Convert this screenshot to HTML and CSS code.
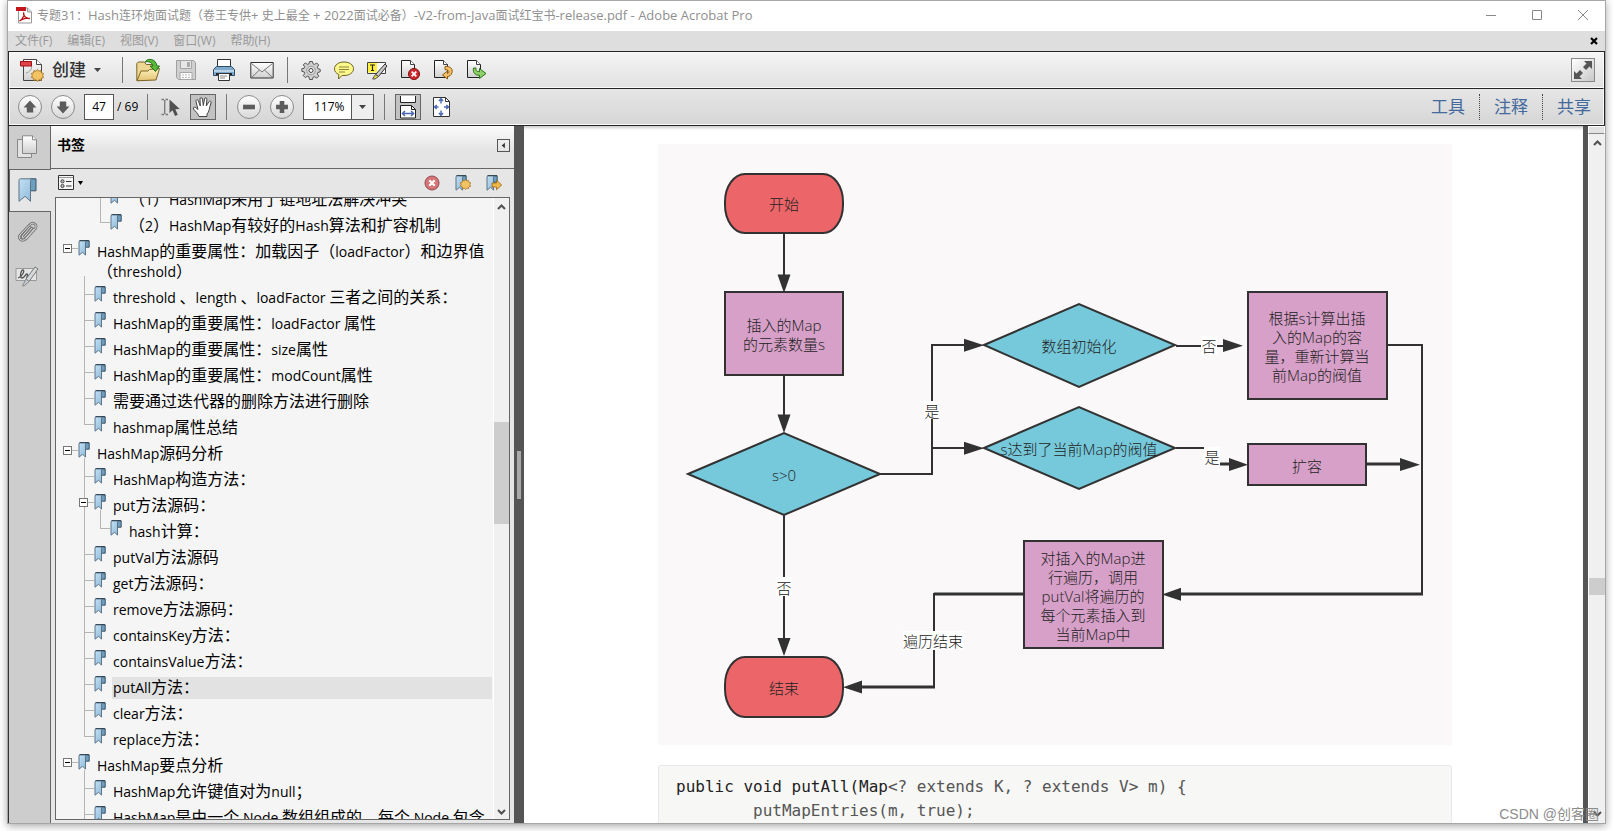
FILE: index.html
```html
<!DOCTYPE html>
<html lang="zh-CN">
<head>
<meta charset="utf-8">
<title>Adobe Acrobat Pro</title>
<link rel="stylesheet" href="styles.css">
</head>
<body>
<svg class="defs" aria-hidden="true">
  <defs>
    <linearGradient id="blue" x1="0" y1="0" x2="1" y2="1"><stop offset="0" stop-color="#c3e0f3"/><stop offset="1" stop-color="#8db9d9"/></linearGradient>
    <linearGradient id="steel" x1="0" y1="0" x2="0" y2="1"><stop offset="0" stop-color="#fff"/><stop offset="1" stop-color="#d0d0d0"/></linearGradient>
    <linearGradient id="gold" x1="0" y1="0" x2="0" y2="1"><stop offset="0" stop-color="#fff3bd"/><stop offset="1" stop-color="#e2c272"/></linearGradient>
    <symbol id="mark" viewBox="0 0 12 16">
      <path d="M7.500 .8h3.700v6.400H7.500z" fill="#6e9fc0" stroke="#3c5364"/>
      <path d="M2.200.8h6.300c-.8.5-1 1.200-1 2v12.400L4.600 12.200 1 15.200V2C1 1.300 1.500.8 2.200.8z" fill="url(#blue)" stroke="#5c7485"/>
      <path d="M1.500.6h9.500" stroke="#2f4351"/>
    </symbol>
    <symbol id="sheet" viewBox="0 0 20 20">
      <path d="M2.500 1.500h9l4 4v13h-13z" fill="url(#steel)" stroke="#222"/>
      <path d="M11.500 1.500v4h4" fill="#fff" stroke="#444"/>
    </symbol>
    <symbol id="burst" viewBox="0 0 12 12">
      <path d="M6 .5l1.300 1.600 2-.6.3 2 2 .6-.8 1.900.8 1.900-2 .6-.3 2-2-.6L6 11.500 4.700 9.900l-2 .6-.3-2-2-.6.8-1.900-.8-1.900 2-.6.3-2 2 .6z" fill="#f3c263" stroke="#a3701a" stroke-width=".8"/>
    </symbol>
  </defs>
</svg>

<div class="window">
  <header class="titlebar">
    <svg class="app-icon" viewBox="0 0 17 17"><path d="M2.500 1h9l4 4v11h-13z" fill="#fff" stroke="#999"/><path d="M11.500 1v4h4" fill="#ddd" stroke="#999"/><path d="M0 0h10v4H0z" fill="#c4161c"/><path d="M3.500 14C7 12 8.500 8 7.700 6c-1 2 2.500 6 6 5.500C11 10.500 6 12 3.500 14z" fill="none" stroke="#b81218" stroke-width="1.300"/></svg>
    <h1 class="title">专题<span class="la">31</span>：<span class="la">Hash</span>连环炮面试题（卷王专供<span class="la">+ </span>史上最全<span class="la"> + 2022</span>面试必备）<span class="la">-V2-from-Java</span>面试红宝书<span class="la">-release.pdf - Adobe Acrobat Pro</span></h1>
    <div class="controls">
      <button aria-label="最小化"><svg viewBox="0 0 12 12"><path d="M1 6.500h10"/></svg></button>
      <button aria-label="最大化"><svg viewBox="0 0 12 12"><path d="M1.500 1.500h9v9h-9z"/></svg></button>
      <button aria-label="关闭"><svg viewBox="0 0 12 12"><path d="M1 1l10 10M11 1L1 11"/></svg></button>
    </div>
  </header>

  <nav class="menubar">
    <button>文件(F)</button><button>编辑(E)</button><button>视图(V)</button><button>窗口(W)</button><button>帮助(H)</button>
    <button class="doc-close" aria-label="关闭文档"><svg viewBox="0 0 8 8"><path d="M1 1l6 6M7 1L1 7" stroke="#000" stroke-width="2.200"/></svg></button>
  </nav>

  <div class="bars">
    <div class="toolbar main-tools">
      <button class="create">
        <svg class="i24" viewBox="0 0 24 24"><path d="M3.500 1.500h13l5 5v16h-18z" fill="url(#steel)" stroke="#444"/><path d="M16.500 1.500v5h5" fill="#fff" stroke="#444"/><path d="M6 15c4-1 6-4 5.500-7" stroke="#999" fill="none"/><path d="M.5 3.500h11v4.500H.5z" fill="#e0444a" stroke="#a01116"/><use href="#burst" x="11" y="11" width="13" height="13"/></svg>
        <span>创建</span>
        <svg class="caret" viewBox="0 0 7 4"><path d="M0 0h7L3.500 4z" fill="#444"/></svg>
      </button>
      <i class="sep"></i>
      <div class="group wide">
        <button class="tool" aria-label="打开"><svg viewBox="0 0 24 24"><path d="M.8 22.500V5.500l1.500-1.500h6l2 2.500h9.500v14z" fill="#eed794" stroke="#7c6424"/><path d="M1 22.800l4-9.800h7l1.500-1.500 10-1-3.500 11.500z" fill="url(#gold)" stroke="#7c6424"/><path d="M9 4c2.500-4 10.500-4 12 4h2.500L19.500 13.500 14 8h3C16 4 12.500 3 9 4z" fill="#5cb93a" stroke="#22711a"/></svg></button>
        <button class="tool" aria-label="保存"><svg viewBox="0 0 24 24"><path d="M2.500 2.500h17l2 2v17h-17l-2-2z" fill="#d0d0d0" stroke="#a0a0a0"/><path d="M6.500 2.500h11v8h-11z" fill="#e7e7e7" stroke="#a5a5a5"/><path d="M13 4h3v5h-3z" fill="#aaa"/><path d="M6 14.500h12v7H6z" fill="#fafafa" stroke="#a5a5a5"/><path d="M8 17h8M8 19.500h8" stroke="#bbb" stroke-dasharray="2 1"/></svg></button>
        <button class="tool" aria-label="打印"><svg viewBox="0 0 24 24"><path d="M5.500 10V1.500h13V10" fill="#fff" stroke="#333"/><path d="M1.500 17.500v-6l3-3h15l3 3v6z" fill="#7fa9cc" stroke="#2f4d68"/><path d="M2 12h20v2H2z" fill="#b8d2e6"/><path d="M4 16h16" stroke="#222" stroke-width="2"/><path d="M6.500 15.500h11v7h-11z" fill="#fff" stroke="#333"/><path d="M8 18h7M8 20h5" stroke="#888"/></svg></button>
        <button class="tool" aria-label="邮件"><svg viewBox="0 0 24 24"><path d="M.8 4.500h22.400v15.500H.8z" fill="url(#steel)" stroke="#333"/><path d="M1.500 5.500L12 14 22.500 5.500M1.500 19.500l8-7.500M22.500 19.500l-8-7.500" fill="none" stroke="#777"/></svg></button>
      </div>
      <i class="sep"></i>
      <div class="group">
        <button class="tool" aria-label="设置"><svg viewBox="0 0 24 24"><path d="M10.500 3.500h3l.5 2.300 1.500.6 2.200-1.400 2 2-1.400 2.200.6 1.500 2.300.6v2.500l-2.300.6-.6 1.500 1.400 2.200-2 2-2.200-1.400-1.500.6-.5 2.200h-3L10 18.800l-1.500-.6-2.200 1.400-2-2 1.400-2.200-.6-1.500-2.300-.6v-2.500l2.300-.6.6-1.500L4.300 6.900l2-2 2.200 1.500 1.500-.6z" fill="#cfcfcf" stroke="#555"/><circle cx="12" cy="12.500" r="4.300" fill="#ddd" stroke="#999"/><circle cx="12" cy="12.500" r="2" fill="#fff" stroke="#444"/></svg></button>
        <button class="tool" aria-label="批注"><svg viewBox="0 0 24 24"><path d="M12 4c5.500 0 9.500 3 9.500 6.800S17.500 17.500 12 17.500l-2-.1L6.500 21l.3-4.500C4 15.300 2.500 13.300 2.500 10.800 2.500 7 6.500 4 12 4z" fill="#fff98c" stroke="#6a6320"/><path d="M7 9h10M7 11.500h10M7 14h6" stroke="#8b843a"/></svg></button>
        <button class="tool" aria-label="高亮文本"><svg viewBox="0 0 24 24"><path d="M2.500 4.500h18v11h-18z" fill="#fafafa" stroke="#444"/><path d="M3 5h9v9.500H3z" fill="#ffef3e"/><path d="M5 7h5M7.500 7v5.500M6 12.500h3" stroke="#222" stroke-width="1.200"/><path d="M20 6l2 2-8.500 10.500-3-2z" fill="#c8c8c8" stroke="#333"/><path d="M10.500 16.500l3 2L10 21H7.500z" fill="#e8dc34" stroke="#555"/></svg></button>
        <button class="tool" aria-label="删除页面"><svg viewBox="0 0 24 24"><use href="#sheet" x="1" y="1" width="20" height="20"/><circle cx="16" cy="16" r="5.500" fill="#d3252c" stroke="#7c0f13"/><path d="M13.700 13.700l4.600 4.600M18.300 13.700l-4.600 4.600" stroke="#fff" stroke-width="1.800"/></svg></button>
        <button class="tool" aria-label="旋转页面"><svg viewBox="0 0 24 24"><use href="#sheet" x="1" y="1" width="20" height="20"/><path d="M14 8.500c5-.5 8 2 7 6-.5 2.500-2.500 4-4.500 4v2.500L11.500 17l5-4v2.500c2-.5 2.500-3.500-2.500-4z" fill="#f5c06a" stroke="#8a5a12"/></svg></button>
        <button class="tool" aria-label="导出页面"><svg viewBox="0 0 24 24"><use href="#sheet" x="1" y="1" width="20" height="20"/><path d="M9.500 10c-1 5 2 7.500 6 7.200v3.300l6.500-5-6.500-5v3.200c-3 0-4-1.200-3.500-3.700z" fill="#8fd06c" stroke="#2c7418"/></svg></button>
      </div>
      <button class="expand" aria-label="阅读模式"><svg viewBox="0 0 20 20"><path d="M11 1h8v8l-2.500-2.500-3.500 3.500-3-3 3.500-3.500zM9 19H1v-8l2.500 2.500L7 10l3 3-3.500 3.500z" fill="#555"/></svg></button>
    </div>

    <div class="toolbar page-tools">
      <div class="group">
        <button class="round" aria-label="上一页"><svg viewBox="0 0 24 24"><path d="M12 5l7 7.500h-3.500V18h-7v-5.500H5z"/></svg></button>
        <button class="round" aria-label="下一页"><svg viewBox="0 0 24 24"><path d="M12 19l7-7.500h-3.500V6h-7v5.500H5z"/></svg></button>
        <div class="pages"><input type="text" id="page" value="47" aria-label="页码"><label for="page">/ 69</label></div>
      </div>
      <i class="sep"></i>
      <div class="group tight">
        <button class="tool" aria-label="选择"><svg viewBox="0 0 24 24"><path d="M3.500 4.500H6M7.500 4.500H10M3.500 19.500H6M7.500 19.500H10M6.700 5v14" stroke="#777" stroke-width="1.300"/><path d="M11.500 4.500v13.500l3-2.800 2.500 5.800 2.800-1.200-2.500-5.500 4.500-.3z" fill="#505050"/></svg></button>
        <button class="tool on" aria-label="手形"><svg viewBox="0 0 24 24"><path d="M8 21.500c-1-3-3.500-5-5.500-7.500-.8-1.500 1-2.500 2.300-1.400L7 14.500 5 6.500C4.600 4.700 6.700 4 7.300 5.800L9.300 11 9 4c0-1.800 2.200-1.800 2.500 0L12.300 10.500 13.500 4c.4-1.700 2.600-1.400 2.400.4L15.300 11l2.500-4.200c1-1.500 2.900-.5 2.200 1.200-1.800 4.500-1.500 9-4 11v2.500z" fill="#fff" stroke="#444"/></svg></button>
      </div>
      <i class="sep"></i>
      <div class="group">
        <button class="round" aria-label="缩小"><svg viewBox="0 0 24 24"><path d="M5.500 9.500h13v5h-13z"/></svg></button>
        <button class="round" aria-label="放大"><svg viewBox="0 0 24 24"><path d="M9.500 5.500h5v4h4v5h-4v4h-5v-4h-4v-5h4z"/></svg></button>
        <div class="zoom">
          <select aria-label="缩放比例"><option>117%</option></select>
          <svg class="caret" viewBox="0 0 7 4"><path d="M0 0h7L3.500 4z" fill="#444"/></svg>
        </div>
      </div>
      <i class="sep"></i>
      <div class="group tight">
        <button class="tool on" aria-label="适合宽度"><svg viewBox="0 0 24 24"><path d="M4.500 1v6.500h15V1" fill="#fff" stroke="#222"/><path d="M4.500 23V10.500h11l4 4V23z" fill="#fff" stroke="#222"/><path d="M15.500 10.500v4h4" fill="none" stroke="#222"/><path d="M6.500 18.500h11M9 16l-2.500 2.500L9 21M15 16l2.500 2.500L15 21" fill="none" stroke="#4a67b5" stroke-width="1.500"/></svg></button>
        <button class="tool" aria-label="适合页面"><svg viewBox="0 0 24 24"><path d="M4.500 2.500h12l4 4v15h-16z" fill="#fff" stroke="#333"/><path d="M16.500 2.500v4h4" fill="none" stroke="#333"/><path d="M12 3.500v5M12 15.500v5M5.500 12h4M15 12h5M10 6l2-2.500L14 6M10 18l2 2.500 2-2.500M7.700 10L5.500 12l2.200 2M17.300 10l2.200 2-2.200 2" fill="none" stroke="#4a67b5" stroke-width="1.400"/></svg></button>
      </div>
      <div class="panes"><button>工具</button><button>注释</button><button>共享</button></div>
    </div>
  </div>

  <div class="content">
    <nav class="strip">
      <button aria-label="页面缩略图"><svg viewBox="0 0 24 24"><path d="M2.500 4.500h14v18h-14z" fill="#e2e2e2" stroke="#888"/><path d="M7.500 .8h10l4 4V18.500h-14z" fill="url(#steel)" stroke="#888"/><path d="M17.500 .8v4h4" fill="#eee" stroke="#888"/></svg></button>
      <button class="current" aria-label="书签"><svg viewBox="0 0 24 24"><path d="M14 .8h6v12h-6z" fill="#6e9fc0" stroke="#3c5364"/><path d="M4.500.8h12c-1.500.5-2 1.700-2 3v19.500L9 18.300l-6 5V2.500C3 1.500 3.500.8 4.500.8z" fill="url(#blue)" stroke="#5c7485"/></svg></button>
      <button aria-label="附件"><svg viewBox="0 0 24 24"><g fill="none" stroke-linecap="round"><path d="M19 8l-8.500 10c-3 3-8 0-5.500-4L15 3.500c3-3 7.500 0 5.500 4L11 18M17 7l-8 9.500c-1 1-2.500 0-1.500-1.500L15 6" stroke="#777" stroke-width="2.600"/><path d="M19 8l-8.500 10c-3 3-8 0-5.500-4L15 3.500c3-3 7.500 0 5.500 4L11 18M17 7l-8 9.500c-1 1-2.500 0-1.500-1.500L15 6" stroke="#ddd"/></g></svg></button>
      <button aria-label="签名"><svg viewBox="0 0 24 24"><path d="M1 4.500h20.500v12H1z" fill="#e5e5e5" stroke="#999"/><path d="M3 14c5-2 7-8 5-8s-4 8-1 8 3-4 5-4-2 5 1 3" fill="none" stroke="#555" stroke-width="1.300"/><path d="M20 3l3 2-9 12.500-3-2.500z" fill="#d5d9dc" stroke="#777"/><path d="M11 15l3 2.500L9 22H7.500z" fill="#c0ccd5" stroke="#888"/></svg></button>
    </nav>

    <aside class="panel">
      <div class="panel-head"><h2>书签</h2><button class="collapse" aria-label="折叠面板"><svg viewBox="0 0 12 12"><path d="M7.500 3v6L4 6z" fill="#333"/></svg></button></div>
      <div class="panel-tools">
        <button class="options" aria-label="选项"><svg class="list" viewBox="0 0 17 16"><path d="M.5.5h15v14H.5z" fill="#f6f6f6" stroke="#333"/><path d="M1 2.500h14" stroke="#999"/><circle cx="4.500" cy="6.300" r="1.600" fill="#bbb" stroke="#444"/><circle cx="4.500" cy="11" r="1.600" fill="#bbb" stroke="#444"/><path d="M8 6.500h5.500M8 11h5.500" stroke="#333"/></svg><svg class="dot" viewBox="0 0 5 4"><path d="M0 0h5L2.500 4z"/></svg></button>
        <button class="mini" aria-label="删除书签"><svg viewBox="0 0 16 16"><circle cx="8" cy="8" r="7" fill="#d87377" stroke="#8d4b4e"/><path d="M5.300 5.300l5.400 5.400M10.700 5.300l-5.400 5.400" stroke="#fff" stroke-width="2.200"/></svg></button>
        <button class="mini" aria-label="新建书签"><svg viewBox="0 0 16 16"><use href="#mark" x="0" y="0" width="12" height="16"/><use href="#burst" x="5" y="4" width="11" height="11"/></svg></button>
        <button class="mini" aria-label="展开当前书签"><svg viewBox="0 0 16 16"><use href="#mark" x="0" y="0" width="12" height="16"/><path d="M6 8h4.500V5.200L15.700 10l-5.200 4.800V12H6z" fill="#f0b646" stroke="#94651a" stroke-width=".8"/></svg></button>
      </div>
      <div class="tree-box">
        <div class="tree-view">
        <ul class="tree">
          <li class="bare"><ul><li class="bare"><ul>
            <li><div class="row"><svg class="bm"><use href="#mark"/></svg><a href="#b1">（<span class="la">1</span>）<span class="la">HashMap</span>采用了链地址法解决冲突</a></div></li>
            <li><div class="row"><svg class="bm"><use href="#mark"/></svg><a href="#b2">（<span class="la">2</span>）<span class="la">HashMap</span>有较好的<span class="la">Hash</span>算法和扩容机制</a></div></li>
          </ul></li></ul></li>
          <li><div class="row"><button class="toggle" aria-label="折叠"></button><svg class="bm"><use href="#mark"/></svg><a href="#b3"><span class="la">HashMap</span>的重要属性：加载因子（<span class="la">loadFactor</span>）和边界值（<span class="la">threshold</span>）</a></div>
            <ul>
              <li><div class="row"><svg class="bm"><use href="#mark"/></svg><a href="#b4"><span class="la">threshold </span>、<span class="la">length </span>、<span class="la">loadFactor </span>三者之间的关系：</a></div></li>
              <li><div class="row"><svg class="bm"><use href="#mark"/></svg><a href="#b5"><span class="la">HashMap</span>的重要属性：<span class="la">loadFactor </span>属性</a></div></li>
              <li><div class="row"><svg class="bm"><use href="#mark"/></svg><a href="#b6"><span class="la">HashMap</span>的重要属性：<span class="la">size</span>属性</a></div></li>
              <li><div class="row"><svg class="bm"><use href="#mark"/></svg><a href="#b7"><span class="la">HashMap</span>的重要属性：<span class="la">modCount</span>属性</a></div></li>
              <li><div class="row"><svg class="bm"><use href="#mark"/></svg><a href="#b8">需要通过迭代器的删除方法进行删除</a></div></li>
              <li><div class="row"><svg class="bm"><use href="#mark"/></svg><a href="#b9"><span class="la">hashmap</span>属性总结</a></div></li>
            </ul>
          </li>
          <li><div class="row"><button class="toggle" aria-label="折叠"></button><svg class="bm"><use href="#mark"/></svg><a href="#b10"><span class="la">HashMap</span>源码分析</a></div>
            <ul>
              <li><div class="row"><svg class="bm"><use href="#mark"/></svg><a href="#b11"><span class="la">HashMap</span>构造方法：</a></div></li>
              <li><div class="row"><button class="toggle" aria-label="折叠"></button><svg class="bm"><use href="#mark"/></svg><a href="#b12"><span class="la">put</span>方法源码：</a></div>
                <ul><li><div class="row"><svg class="bm"><use href="#mark"/></svg><a href="#b13"><span class="la">hash</span>计算：</a></div></li></ul>
              </li>
              <li><div class="row"><svg class="bm"><use href="#mark"/></svg><a href="#b14"><span class="la">putVal</span>方法源码</a></div></li>
              <li><div class="row"><svg class="bm"><use href="#mark"/></svg><a href="#b15"><span class="la">get</span>方法源码：</a></div></li>
              <li><div class="row"><svg class="bm"><use href="#mark"/></svg><a href="#b16"><span class="la">remove</span>方法源码：</a></div></li>
              <li><div class="row"><svg class="bm"><use href="#mark"/></svg><a href="#b17"><span class="la">containsKey</span>方法：</a></div></li>
              <li><div class="row"><svg class="bm"><use href="#mark"/></svg><a href="#b18"><span class="la">containsValue</span>方法：</a></div></li>
              <li><div class="row"><svg class="bm"><use href="#mark"/></svg><a class="selected" href="#b19"><span class="la">putAll</span>方法：</a></div></li>
              <li><div class="row"><svg class="bm"><use href="#mark"/></svg><a href="#b20"><span class="la">clear</span>方法：</a></div></li>
              <li><div class="row"><svg class="bm"><use href="#mark"/></svg><a href="#b21"><span class="la">replace</span>方法：</a></div></li>
            </ul>
          </li>
          <li><div class="row"><button class="toggle" aria-label="折叠"></button><svg class="bm"><use href="#mark"/></svg><a href="#b22"><span class="la">HashMap</span>要点分析</a></div>
            <ul>
              <li><div class="row"><svg class="bm"><use href="#mark"/></svg><a href="#b23"><span class="la">HashMap</span>允许键值对为<span class="la">null</span>；</a></div></li>
              <li class="more"><div class="row"><svg class="bm"><use href="#mark"/></svg><a href="#b24"><span class="la">HashMap</span>是由一个<span class="la"> Node </span>数组组成的，每个<span class="la"> Node </span>包含</a></div></li>
            </ul>
          </li>
        </ul>
        </div>
        <div class="scroll">
          <svg class="arrow" viewBox="0 0 9 6"><path d="M1 5l3.500-3.500L8 5"/></svg>
          <div class="track tree-track"><i class="before"></i><i class="thumb"></i><i class="after"></i></div>
          <svg class="arrow" viewBox="0 0 9 6"><path d="M1 1l3.500 3.500L8 1"/></svg>
        </div>
      </div>
    </aside>

    <div class="splitter"><i></i></div>

    <main class="document">
      <div class="page">
        <svg class="flow" viewBox="0 0 794 601" role="img" aria-label="putMapEntries 流程图">
          <g class="line">
            <path d="M126 89v45M126 231v45M126 371v130M222 330h52V201h36M274 304h36M518 202h52M729 201h35v249M518 304h28"/>
            <path class="heavy" d="M562 320h14M708 320h38M765 450H520M366 450h-90"/>
            <path d="M276 449v94"/>
            <path class="heavy" d="M277 543h-76"/>
          </g>
          <g class="head">
            <path d="M119.500 130.500h13L126 149zM119.500 270.500h13L126 289zM119.500 494h13L126 512zM306 194.700v13l20-6.500zM306 297.700v13l20-6.500zM565 195v13l20-6.300zM571 314v13l19-6.300zM742 314v13l20-6.300zM523 443.700v13l-19-6.300zM204 536.500v13l-19-6.300z"/>
          </g>
          <g class="end"><rect x="67" y="30" width="118" height="59" rx="20" ry="28"/><rect x="67" y="513" width="118" height="60" rx="20" ry="28"/></g>
          <g class="step"><rect x="67" y="148" width="118" height="83"/><rect x="590" y="148" width="139" height="107"/><rect x="590" y="300" width="118" height="41"/><rect x="366" y="397" width="139" height="107"/></g>
          <g class="choice"><path d="M30 330l96-41 96 41-96 41zM326 201l95-41 96 41-96 42zM326 304l95-41 96 41-96 41z"/></g>
          <g class="plate"><path d="M266 257h16v18h-16zM543 192h16v19h-16zM546 303h16v17h-16zM118 433h16v19h-16zM245 487h61v19h-61z"/></g>
          <g class="words">
            <text x="126" y="66">开始</text>
            <text x="126" y="187">插入的Map</text><text x="126" y="206">的元素数量s</text>
            <text x="126" y="337">s&gt;0</text>
            <text x="421" y="208">数组初始化</text>
            <text x="421" y="311">s达到了当前Map的阀值</text>
            <text x="659" y="180">根据s计算出插</text><text x="659" y="199">入的Map的容</text><text x="659" y="218">量，重新计算当</text><text x="659" y="237">前Map的阀值</text>
            <text x="649" y="328">扩容</text>
            <text x="435" y="420">对插入的Map进</text><text x="435" y="439">行遍历，调用</text><text x="435" y="458">putVal将遍历的</text><text x="435" y="477">每个元素插入到</text><text x="435" y="496">当前Map中</text>
            <text x="126" y="550">结束</text>
            <text x="274" y="273">是</text><text x="551" y="208">否</text><text x="554" y="319">是</text><text x="126" y="450">否</text><text x="275" y="503">遍历结束</text>
          </g>
        </svg>
        <pre class="code"><code><b>public void putAll(Map</b>&lt;? extends K, ? extends V&gt; m) {
        putMapEntries(m, true);
}</code></pre>
      </div>
    </main>

    <div class="doc-side">
      <i class="split-box"></i>
      <div class="scroll">
        <svg class="arrow" viewBox="0 0 9 6"><path d="M1 5l3.500-3.500L8 5"/></svg>
        <div class="track doc-track"><i class="before"></i><i class="thumb"></i><i class="after"></i></div>
        <svg class="arrow" viewBox="0 0 9 6"><path d="M1 1l3.500 3.500L8 1"/></svg>
      </div>
    </div>
  </div>
  <p class="watermark">CSDN @创客圈</p>
</div>
</body>
</html>
```

FILE: styles.css
```css
* { box-sizing: border-box; }
body {
  margin: 0;
  padding: 0 7px 7px;
  height: 100vh;
  background: #fff;
  color: #000;
  overflow: hidden;
  font-family: "Open Sans", "Noto Sans CJK SC", sans-serif;
}
button { margin: 0; padding: 0; border: 0; background: none; font: inherit; color: inherit; }
svg { display: block; }
.defs { position: absolute; width: 0; height: 0; }

.window {
  position: relative;
  display: flex;
  flex-direction: column;
  height: 100%;
  border: 1px solid #a6a6a6;
  box-shadow: 0 2px 8px rgba(0, 0, 0, .35);
  background: #dedede;
}

/* Title and menu */
.titlebar { display: flex; align-items: center; flex: none; height: 30px; padding: 0 16px 2px 8px; background: #fff; }
.app-icon { width: 17px; height: 17px; margin-right: 4px; }
.title { flex: 1; margin: 0; font-size: 12px; font-weight: 400; line-height: 18px; color: #8f8f8f; white-space: pre; }
.title .la { font-size: 13px; }
.controls { display: flex; gap: 34px; }
.controls svg { width: 12px; height: 12px; fill: none; stroke: #888; }
.menubar { display: flex; align-items: center; flex: none; gap: 15px; height: 20px; padding: 0 7px; font-size: 12px; line-height: 18px; color: #9a9a9a; }
.doc-close { margin-left: auto; }
.doc-close svg { width: 8px; height: 8px; }

/* Toolbars */
.bars { flex: none; border: 1px solid #262626; }
.toolbar { display: flex; align-items: center; height: 36px; border: 1px solid #fafafa; }
.main-tools { padding-left: 10px; background: linear-gradient(#f4f4f4, #e2e2e2); }
.page-tools { height: 37px; padding-left: 8px; border-top: 1px solid #262626; background: linear-gradient(#e6e6e6, #d6d6d6); }
.sep { flex: none; width: 1px; height: 26px; margin: 0 11px; background: #777; }
.page-tools .sep { margin: 0 10px; }
.group { display: flex; align-items: center; gap: 9px; }
.group.wide { gap: 14px; padding: 0 2px; }
.group.tight { gap: 8px; }
.i24 { width: 24px; height: 24px; }
.create { display: flex; align-items: center; gap: 8px; margin-right: 10px; font-size: 17px; line-height: 24px; font-weight: 500; color: #333; }
.caret { width: 7px; height: 4px; }
.tool { width: 24px; height: 24px; }
.tool svg { width: 24px; height: 24px; }
.tool.on { width: 26px; height: 26px; border: 1px solid #666; background: #c2c2c2; }
.expand { width: 24px; height: 24px; margin-left: auto; margin-right: 8px; padding: 1px; border: 1px solid #888; background: linear-gradient(135deg, #fff, #c8c8c8); }
.expand svg { width: 20px; height: 20px; }
.round { width: 24px; height: 24px; border: 1px solid #8b8b8b; border-radius: 50%; background: linear-gradient(#fff, #d8d8d8); }
.round svg { width: 22px; height: 22px; fill: #5c5c5c; }
.pages { display: flex; align-items: center; gap: 3px; font-size: 12px; }
.pages input { width: 30px; height: 26px; padding: 0; border: 1px solid #555; background: #fff; font: inherit; text-align: center; }
.pages label { width: 20px; white-space: nowrap; }
.zoom { position: relative; width: 71px; height: 26px; }
.zoom select {
  appearance: none;
  width: 100%;
  height: 100%;
  padding: 0 0 0 10px;
  border: 1px solid #555;
  border-radius: 0;
  background: linear-gradient(to left, #eee 21px, #555 21px, #555 22px, #fff 22px);
  font: inherit;
  font-size: 12px;
  color: #000;
}
.zoom .caret { position: absolute; right: 8px; top: 11px; pointer-events: none; }
.panes { display: flex; align-items: center; margin-left: auto; font-size: 17px; line-height: 26px; color: #44699c; }
.panes button { padding: 0 14px; }
.panes button:last-child { padding-right: 12px; }
.panes button + button { border-left: 1px dotted #444; }

/* Navigation strip */
.content { display: flex; flex: 1; min-height: 0; border-left: 1px solid #333; background: #e6e6e6; }
.strip { flex: none; width: 42px; border-right: 1px solid #666; background: #cdcdcd; }
.strip button { display: grid; place-items: center; width: 42px; height: 43px; padding: 0 6px 2px 0; }
.strip .current { border: 1px solid #666; border-right: 0; background: #e6e6e6; }
.strip svg { width: 24px; height: 24px; }

/* Bookmarks */
.panel { display: flex; flex-direction: column; flex: none; width: 463px; }
.panel-head { display: flex; align-items: center; justify-content: space-between; flex: none; height: 43px; padding: 0 4px 4px 6px; border-bottom: 1px solid #666; background: linear-gradient(#fbfbfb, #e4e4e4 60%); }
.panel-head h2 { margin: 0; font-size: 14px; line-height: 20px; font-weight: 700; }
.collapse { width: 13px; height: 13px; border: 1px solid #555; }
.collapse svg { width: 11px; height: 11px; }
.panel-tools { display: flex; align-items: center; flex: none; gap: 15px; height: 28px; padding: 0 12px 0 7px; }
.options { display: flex; align-items: center; gap: 3px; margin-right: auto; }
.list { width: 17px; height: 16px; }
.dot { width: 5px; height: 4px; }
.mini svg { width: 16px; height: 16px; }
.tree-box { display: flex; flex: 1; min-height: 0; margin: 0 4px 3px; border: 1px solid #666; background: #f5f5f5; }
.tree-view { flex: 1; min-width: 0; overflow: hidden; }
.tree { margin: -12px 0 0; padding: 0; font-size: 16px; line-height: 20px; }
.tree ul { margin: 0; padding: 0 0 0 16px; }
.tree li { position: relative; list-style: none; }
.tree li::after { content: ""; position: absolute; left: 12px; top: 10px; width: 10px; border-top: 1px solid #b5b5b5; }
.tree li li::before { content: ""; position: absolute; left: 12px; top: -8px; bottom: 0; border-left: 1px solid #b5b5b5; }
.tree li li:last-child::before { bottom: auto; height: 18px; }
.tree li li.more::before { bottom: 0; height: auto; }
.tree li.bare::before, .tree li.bare::after { display: none; }
.row { position: relative; z-index: 1; display: flex; align-items: flex-start; padding-left: 22px; }
.bm { flex: none; width: 12px; height: 16px; margin: 2px 6px 0 0; }
.toggle { flex: none; width: 9px; height: 9px; margin: 6px 6px 0 -15px; border: 1px solid #777; background: linear-gradient(#000, #000) center / 5px 1px no-repeat #fff; }
.row a { flex: 1; margin: 3px 1px 1px 0; padding: 0 0 2px 1px; color: #000; text-decoration: none; }
.row .la { font-size: 14px; line-height: 16px; white-space: pre-wrap; }
.row .selected { background: #e2e2e2; }

/* Scrollbars */
.scroll { display: flex; flex-direction: column; flex: none; align-items: center; width: 16px; padding: 6px 0 4px; border-left: 1px solid #fff; background: #f0f0f0; }
.arrow { flex: none; width: 9px; height: 6px; fill: none; stroke: #505050; stroke-width: 2; }
.track { display: flex; flex-direction: column; flex: 1; width: 100%; }
.thumb { background: #cdcdcd; }
.tree-track .before { flex: 211; }
.tree-track .thumb { flex: 101; }
.tree-track .after { flex: 284; }
.doc-track .before { flex: 432; }
.doc-track .thumb { flex: 17; }
.doc-track .after { flex: 216; }

.splitter { display: grid; place-items: center; flex: none; width: 10px; background: #555; }
.splitter i { width: 4px; height: 48px; background: radial-gradient(circle at 1px 1px, #aaa 0 1px, transparent 1px) 0 0 / 2px 2px; }

/* Document */
.document { flex: 1; min-width: 0; overflow: hidden; padding: 18px 20px 0 23px; background: #fff; box-shadow: inset 0 4px 3px -2px #ccc; }
.page { max-width: 794px; margin: 0 auto; }
.flow { width: 100%; background: #faf8f9; }
.line { fill: none; stroke: #323232; stroke-width: 2; }
.line .heavy { stroke-width: 3; }
.head { fill: #323232; }
.end, .step, .choice { stroke: #323232; stroke-width: 2; }
.end { fill: #ec6569; }
.step { fill: #d7a0c8; }
.choice { fill: #76c9db; }
.plate { fill: #fff; }
.words { font-size: 15px; font-weight: 300; fill: #222; text-anchor: middle; }
.code { margin: 20px 0 0; padding: 9px 17px; border: 1px solid #e6e8eb; border-radius: 3px; background: #f7f7f5; font-family: "DejaVu Sans Mono", monospace; font-size: 16px; line-height: 24px; color: #555; }
.code code { font: inherit; }
.code b { font-weight: 400; color: #222; }
.doc-side { display: flex; flex-direction: column; flex: none; width: 22px; border-left: 5px solid #555; }
.doc-side .scroll { flex: 1; width: 17px; padding: 6px 0; }
.split-box { height: 8px; border: 1px solid #fff; border-bottom: 1px solid #888; background: #e2e2e2; }
.watermark { position: absolute; right: 6px; bottom: 0; margin: 0; font-size: 14px; line-height: 18px; font-family: "Liberation Sans", "Noto Sans CJK SC", sans-serif; color: #8c8c8c; }
```
